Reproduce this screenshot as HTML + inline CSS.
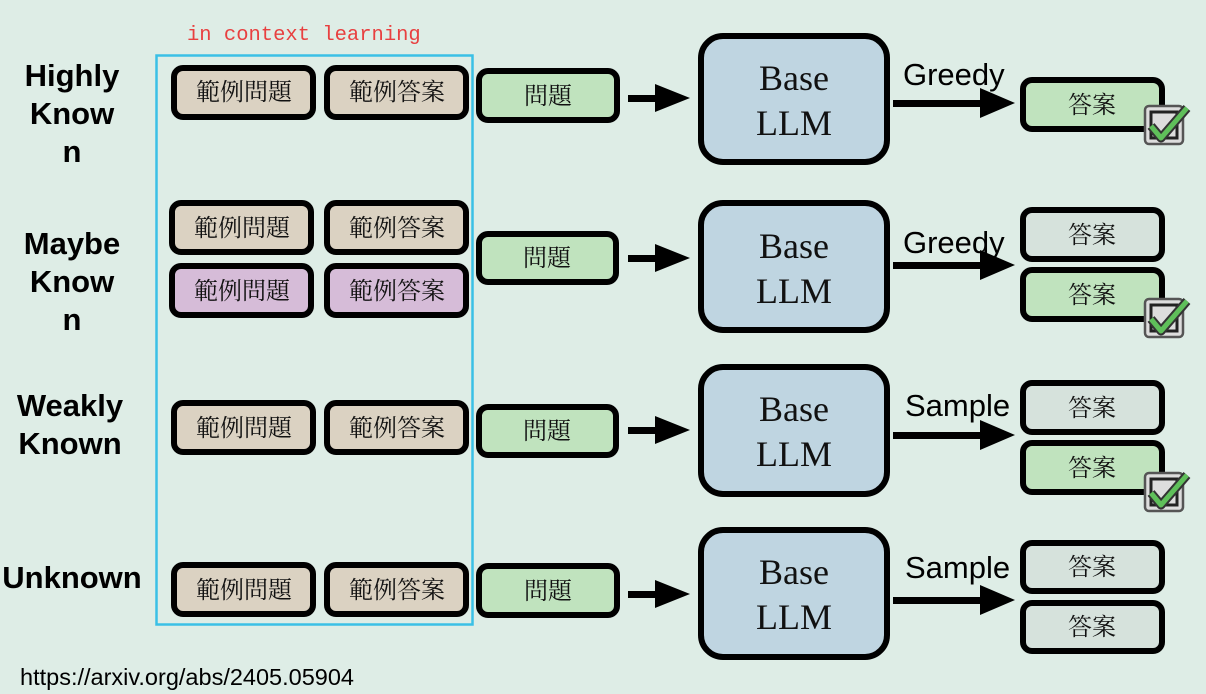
<!DOCTYPE html>
<html><head><meta charset="utf-8"><style>
html,body{margin:0;padding:0;background:#deede6;}
svg{display:block}
.cj{font-family:"Liberation Serif","Noto Serif CJK SC","Noto Sans CJK SC",serif;font-size:24px;fill:#111}
.lb{font-family:"Liberation Sans",sans-serif;font-weight:bold;font-size:31px;fill:#000}
.ar{font-family:"Liberation Sans",sans-serif;font-size:31px;fill:#000}
.llm{font-family:"Liberation Serif",serif;font-size:36px;fill:#111}
</style></head><body>
<svg width="1206" height="694" viewBox="0 0 1206 694">
<defs>
<g id="chk">
<rect x="2" y="2" width="38" height="38" rx="4" fill="#ddd" stroke="#555" stroke-width="2.5"/>
<rect x="8" y="8" width="26" height="26" fill="none" stroke="#222" stroke-width="3"/>
<path d="M8 22 L18 34 L44 4" fill="none" stroke="#333" stroke-width="9" stroke-linejoin="round"/>
<path d="M8 22 L18 34 L44 4" fill="none" stroke="#5fbf5a" stroke-width="5" stroke-linejoin="round"/>
</g>
</defs>
<text x="187" y="40" font-family="Liberation Mono,monospace" font-size="20.5" fill="#e84040">in context learning</text>
<rect x="156.5" y="55.5" width="316" height="569" fill="none" stroke="#3ac0e6" stroke-width="2.5"/>

<g class="lb" text-anchor="middle">
<text x="72" y="86">Highly</text><text x="72" y="124">Know</text><text x="72" y="162">n</text>
<text x="72" y="254">Maybe</text><text x="72" y="292">Know</text><text x="72" y="330">n</text>
<text x="70" y="416">Weakly</text><text x="70" y="454">Known</text>
<text x="72" y="588">Unknown</text>
</g>

<g stroke="#000" stroke-width="6">
<rect x="174" y="68" width="139" height="49" rx="9" fill="#dbd2c2"/>
<rect x="327" y="68" width="139" height="49" rx="9" fill="#dbd2c2"/>
<rect x="172" y="203" width="139" height="49" rx="9" fill="#dbd2c2"/>
<rect x="327" y="203" width="139" height="49" rx="9" fill="#dbd2c2"/>
<rect x="172" y="266" width="139" height="49" rx="9" fill="#d6bcd8"/>
<rect x="327" y="266" width="139" height="49" rx="9" fill="#d6bcd8"/>
<rect x="174" y="403" width="139" height="49" rx="9" fill="#dbd2c2"/>
<rect x="327" y="403" width="139" height="49" rx="9" fill="#dbd2c2"/>
<rect x="174" y="565" width="139" height="49" rx="9" fill="#dbd2c2"/>
<rect x="327" y="565" width="139" height="49" rx="9" fill="#dbd2c2"/>
<rect x="479" y="71" width="138" height="49" rx="9" fill="#c0e3be"/>
<rect x="479" y="234" width="137" height="48" rx="9" fill="#c0e3be"/>
<rect x="479" y="407" width="137" height="48" rx="9" fill="#c0e3be"/>
<rect x="479" y="566" width="138" height="49" rx="9" fill="#c0e3be"/>
<rect x="701" y="36" width="186" height="126" rx="22" fill="#bfd5e1"/>
<rect x="701" y="203" width="186" height="127" rx="22" fill="#bfd5e1"/>
<rect x="701" y="367" width="186" height="127" rx="22" fill="#bfd5e1"/>
<rect x="701" y="530" width="186" height="127" rx="22" fill="#bfd5e1"/>
<rect x="1023" y="80" width="139" height="49" rx="9" fill="#c0e3be"/>
<rect x="1023" y="210" width="139" height="49" rx="9" fill="#d6e2dc"/>
<rect x="1023" y="270" width="139" height="49" rx="9" fill="#c0e3be"/>
<rect x="1023" y="383" width="139" height="49" rx="9" fill="#d6e2dc"/>
<rect x="1023" y="443" width="139" height="49" rx="9" fill="#c0e3be"/>
<rect x="1023" y="543" width="139" height="48" rx="9" fill="#d6e2dc"/>
<rect x="1023" y="603" width="139" height="48" rx="9" fill="#d6e2dc"/>
</g>

<g class="cj" text-anchor="middle">
<text x="244" y="100">範例問題</text><text x="397" y="100">範例答案</text>
<text x="242" y="236">範例問題</text><text x="397" y="236">範例答案</text>
<text x="242" y="299">範例問題</text><text x="397" y="299">範例答案</text>
<text x="244" y="436">範例問題</text><text x="397" y="436">範例答案</text>
<text x="244" y="598">範例問題</text><text x="397" y="598">範例答案</text>
<text x="548" y="104">問題</text><text x="547" y="266">問題</text>
<text x="547" y="439">問題</text><text x="548" y="599">問題</text>
<text x="1092" y="113">答案</text><text x="1092" y="243">答案</text>
<text x="1092" y="303">答案</text><text x="1092" y="416">答案</text>
<text x="1092" y="476">答案</text><text x="1092" y="575">答案</text>
<text x="1092" y="635">答案</text>
</g>

<g class="llm" text-anchor="middle">
<text x="794" y="90">Base</text><text x="794" y="135">LLM</text>
<text x="794" y="258">Base</text><text x="794" y="303">LLM</text>
<text x="794" y="421">Base</text><text x="794" y="466">LLM</text>
<text x="794" y="584">Base</text><text x="794" y="629">LLM</text>
</g>

<g fill="#000">
<rect x="628" y="95" width="30" height="7"/><path d="M655 84 L690 98 L655 112Z"/>
<rect x="628" y="255" width="30" height="7"/><path d="M655 244 L690 258 L655 272Z"/>
<rect x="628" y="427" width="30" height="7"/><path d="M655 416 L690 430 L655 444Z"/>
<rect x="628" y="591" width="30" height="7"/><path d="M655 580 L690 594 L655 608Z"/>
<rect x="893" y="100" width="90" height="7"/><path d="M980 88 L1015 103 L980 118Z"/>
<rect x="893" y="262" width="90" height="7"/><path d="M980 250 L1015 265 L980 280Z"/>
<rect x="893" y="432" width="90" height="7"/><path d="M980 420 L1015 435 L980 450Z"/>
<rect x="893" y="597" width="90" height="7"/><path d="M980 585 L1015 600 L980 615Z"/>
</g>
<g class="ar">
<text x="903" y="85">Greedy</text><text x="903" y="253">Greedy</text>
<text x="905" y="416">Sample</text><text x="905" y="578">Sample</text>
</g>

<use href="#chk" x="1143" y="104"/>
<use href="#chk" x="1143" y="297"/>
<use href="#chk" x="1143" y="471"/>

<text x="20" y="685" font-family="Liberation Sans,sans-serif" font-size="23.5" fill="#000">https://arxiv.org/abs/2405.05904</text>
</svg>
</body></html>
